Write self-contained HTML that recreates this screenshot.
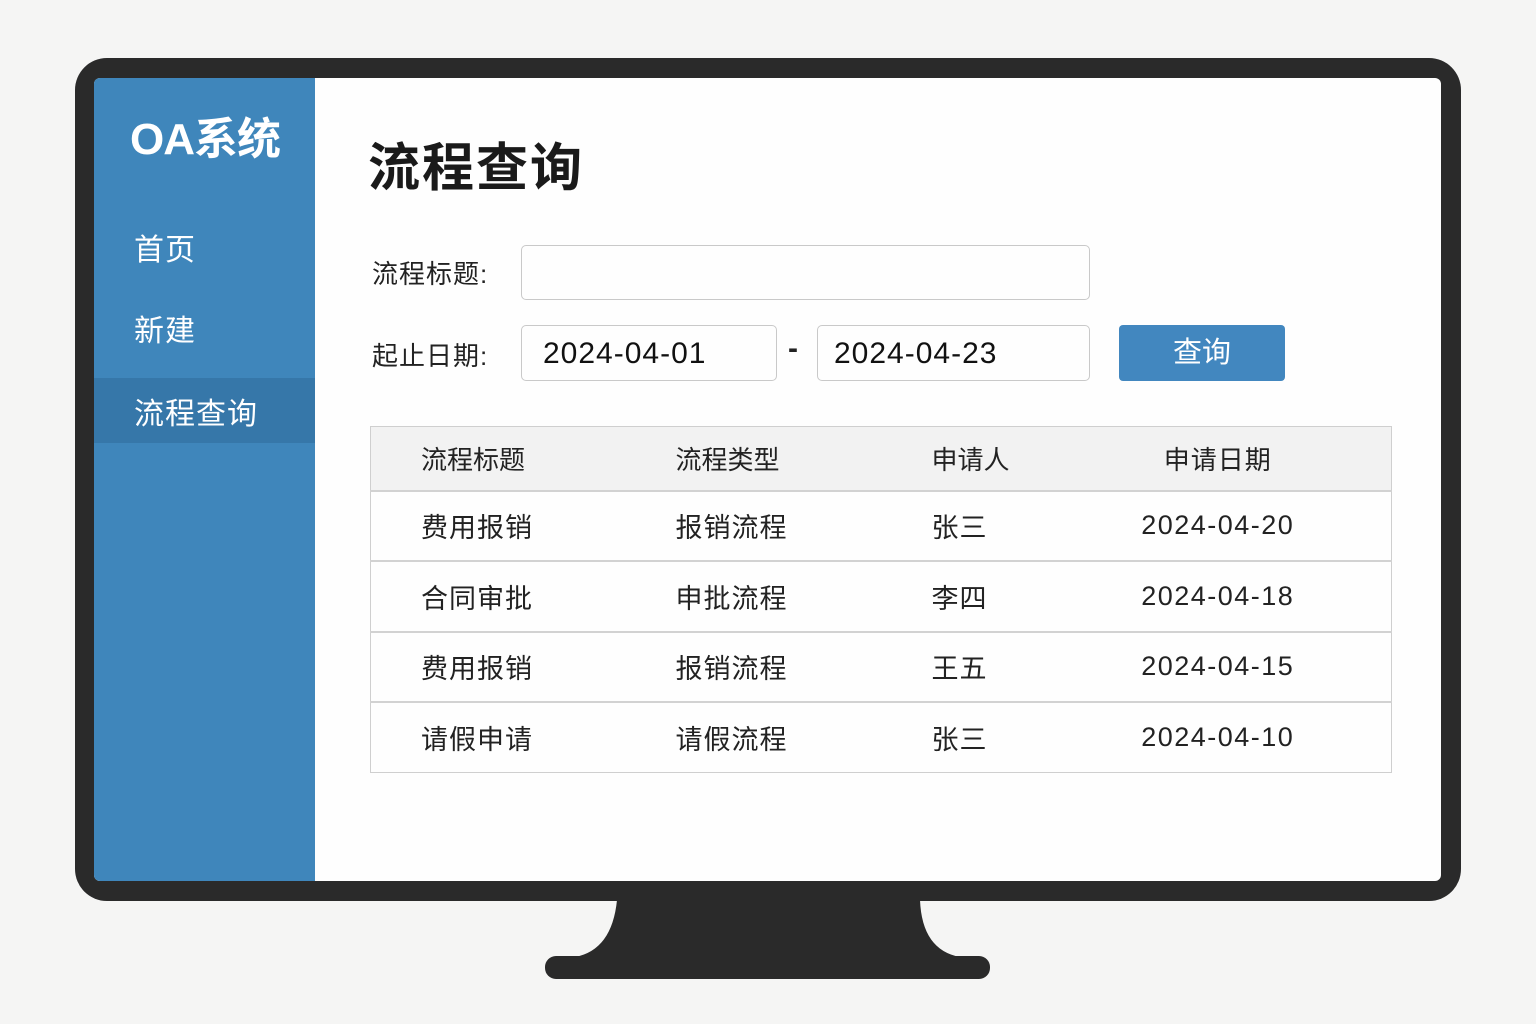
<!DOCTYPE html>
<html><head><meta charset="utf-8"><style>
*{margin:0;padding:0;box-sizing:border-box}
body{width:1536px;height:1024px;background:#f5f5f4;position:relative;overflow:hidden;font-family:"Liberation Sans","Noto Sans CJK SC",sans-serif;color:#222}
.frame{position:absolute;left:75px;top:58px;width:1386px;height:843px;background:#2a2a2a;border-radius:32px}
.screen{position:absolute;left:94px;top:78px;width:1347px;height:803px;background:#fefefe;border-radius:6px;overflow:hidden}
.side{position:absolute;left:0;top:0;width:221px;height:100%;background:#3f86bb}
.logo{position:absolute;left:36px;top:25px;color:#fff;font-size:44px;font-weight:bold;letter-spacing:-1px}
.nav{position:absolute;left:40px;color:#fff;font-size:30px;letter-spacing:1px}
.active{position:absolute;left:0;top:300px;width:221px;height:65px;background:#3677a9}
h1{position:absolute;left:274px;top:48px;font-size:52px;font-weight:bold;color:#1a1a1a;letter-spacing:2px}
.lbl{position:absolute;left:278px;font-size:26px;color:#222;letter-spacing:1px}
.inp{position:absolute;border:1.5px solid #c9c9c9;border-radius:5px;height:56px;font-size:30px;padding-left:21px;line-height:55px;color:#111;letter-spacing:1px}
.btn{position:absolute;left:1025px;top:247px;width:166px;height:56px;background:#4287bf;border-radius:4px;color:#fff;font-size:29px;text-align:center;line-height:56px}
table{position:absolute;left:276px;top:348px;width:1022px;border-collapse:collapse;border:1.5px solid #cfcfcf;font-size:26px;table-layout:fixed}
th{background:#f2f2f2;font-weight:normal;height:64px}
td{height:70.5px;border-top:2px solid #d2d2d2;font-size:27px;letter-spacing:1px}
th,td{text-align:left}
.c1{padding-left:50px}.c2{padding-left:50px}.c3{padding-left:51px}.c4{text-align:center;letter-spacing:1.5px;font-size:27px}
th.c4{font-size:26px;letter-spacing:1px}
.stand{position:absolute;left:0;top:0}
</style></head><body>
<div class="frame"></div>
<svg class="stand" width="1536" height="1024"><path d="M617 900 L920 900 Q922 950 960 957 L575 957 Q612 950 617 900Z" fill="#2a2a2a"/><rect x="545" y="956" width="445" height="23" rx="11" fill="#2a2a2a"/></svg>
<div class="screen">
<div class="side">
<div class="logo">OA系统</div>
<div class="active"></div>
<div class="nav" style="top:147px">首页</div>
<div class="nav" style="top:228px">新建</div>
<div class="nav" style="top:311px">流程查询</div>
</div>
<h1>流程查询</h1>
<div class="lbl" style="top:176px">流程标题:</div>
<div class="inp" style="left:427px;top:167px;width:569px;height:55px"></div>
<div class="lbl" style="top:258px">起止日期:</div>
<div class="inp" style="left:427px;top:247px;width:256px">2024-04-01</div>
<div style="position:absolute;left:694px;top:254px;font-size:30px;font-weight:bold">-</div>
<div class="inp" style="left:723px;top:247px;width:273px;padding-left:16px">2024-04-23</div>
<div class="btn">查询</div>
<table>
<colgroup><col style="width:255px"><col style="width:255px"><col style="width:164px"><col></colgroup>
<tr><th class="c1">流程标题</th><th class="c2">流程类型</th><th class="c3">申请人</th><th class="c4">申请日期</th></tr>
<tr><td class="c1">费用报销</td><td class="c2">报销流程</td><td class="c3">张三</td><td class="c4">2024-04-20</td></tr>
<tr><td class="c1">合同审批</td><td class="c2">申批流程</td><td class="c3">李四</td><td class="c4">2024-04-18</td></tr>
<tr><td class="c1">费用报销</td><td class="c2">报销流程</td><td class="c3">王五</td><td class="c4">2024-04-15</td></tr>
<tr><td class="c1">请假申请</td><td class="c2">请假流程</td><td class="c3">张三</td><td class="c4">2024-04-10</td></tr>
</table>
</div>
</body></html>
